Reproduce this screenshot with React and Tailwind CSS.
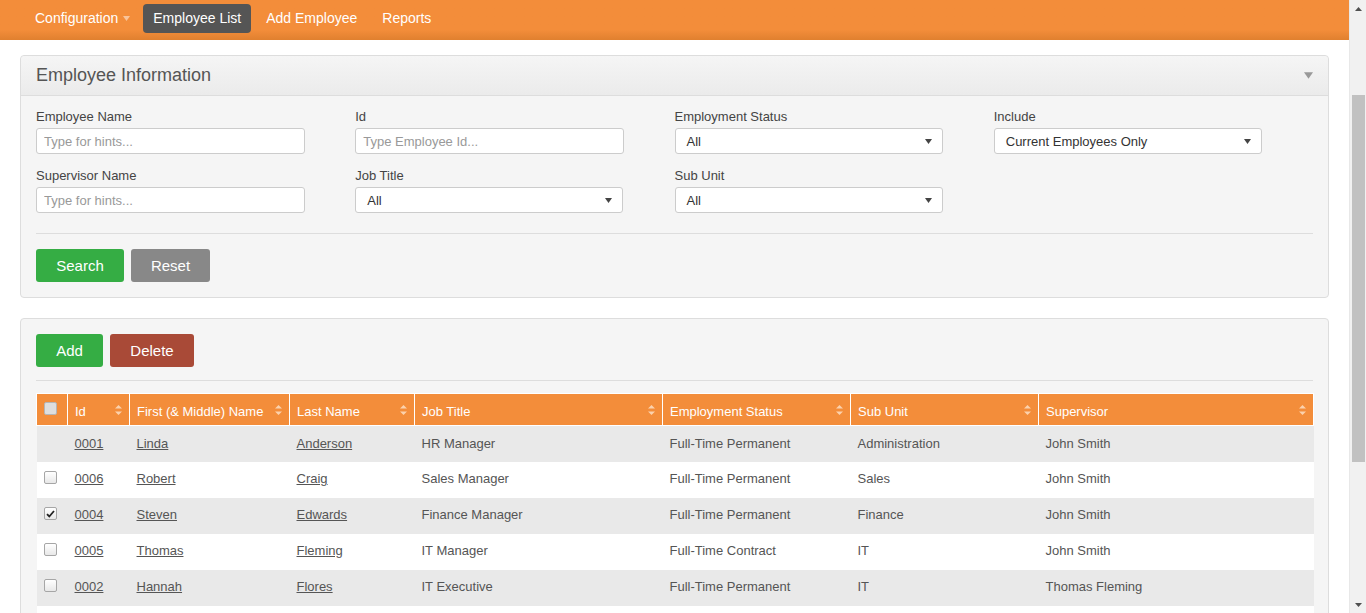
import React from 'react';

const employees = [
  { id: '0001', first: 'Linda', last: 'Anderson', job: 'HR Manager', status: 'Full-Time Permanent', unit: 'Administration', sup: 'John Smith', box: false },
  { id: '0006', first: 'Robert', last: 'Craig', job: 'Sales Manager', status: 'Full-Time Permanent', unit: 'Sales', sup: 'John Smith', box: true },
  { id: '0004', first: 'Steven', last: 'Edwards', job: 'Finance Manager', status: 'Full-Time Permanent', unit: 'Finance', sup: 'John Smith', box: true, checked: true },
  { id: '0005', first: 'Thomas', last: 'Fleming', job: 'IT Manager', status: 'Full-Time Contract', unit: 'IT', sup: 'John Smith', box: true },
  { id: '0002', first: 'Hannah', last: 'Flores', job: 'IT Executive', status: 'Full-Time Permanent', unit: 'IT', sup: 'Thomas Fleming', box: true },
];

const columns = [
  { label: 'Id', w: 'w-[62px]' },
  { label: 'First (& Middle) Name', w: 'w-[160px]' },
  { label: 'Last Name', w: 'w-[125px]' },
  { label: 'Job Title', w: 'w-[248px]' },
  { label: 'Employment Status', w: 'w-[188px]' },
  { label: 'Sub Unit', w: 'w-[188px]' },
  { label: 'Supervisor', w: 'w-[275px]' },
];

// small down triangle used by selects and menus
const Caret = ({ className }) => (
  <svg width="7" height="5" viewBox="0 0 7 5" className={className}>
    <path d="M0 0 H7 L3.5 5 Z" fill="currentColor" />
  </svg>
);

const SortIcon = () => (
  <svg width="7" height="10" viewBox="0 0 7 10" className="text-[#fbd2ad]">
    <path d="M3.5 0 L7 3.5 H0 Z" fill="currentColor" />
    <path d="M0 6.5 H7 L3.5 10 Z" fill="currentColor" />
  </svg>
);

const CheckBox = ({ checked, header }) => (
  <span
    className={
      'inline-flex items-center justify-center w-[13px] h-[13px] rounded-[2px] border ' +
      (header ? 'border-[#b5b5b5] bg-[#dedede]' : 'border-[#a6a6a6] bg-gradient-to-b from-white to-[#e8e8e8]')
    }
  >
    {checked && (
      <svg width="9" height="8" viewBox="0 0 9 8">
        <path d="M1 4.2 L3.3 6.5 L8 1" stroke="#222" strokeWidth="1.8" fill="none" />
      </svg>
    )}
  </span>
);

const TextField = ({ label, placeholder }) => (
  <div>
    <div className="pt-[1px] text-[13px] leading-[18px] text-[#444]">{label}</div>
    <input
      readOnly
      placeholder={placeholder}
      className="mt-[2px] w-[269px] h-[26px] px-[7px] pt-[1px] text-[13px] bg-white border border-[#ccc] rounded-[3px] placeholder:text-[#999] outline-none"
    />
  </div>
);

const SelectField = ({ label, value }) => (
  <div>
    <div className="pt-[1px] text-[13px] leading-[18px] text-[#444]">{label}</div>
    <div className="mt-[2px] w-[268px] h-[26px] pl-[11px] pr-[10px] pt-[1px] flex items-center justify-between text-[13px] text-[#333] bg-white border border-[#ccc] rounded-[3px]">
      <span>{value}</span>
      <Caret className="text-[#444]" />
    </div>
  </div>
);

const App = () => {
  return (
    <div className="h-[613px] overflow-hidden flex bg-white" style={{ fontFamily: '"Liberation Sans", Arial, sans-serif' }}>
      <div className="flex-1 overflow-hidden">
        {/* top menu */}
        <nav className="h-[40px] bg-gradient-to-b from-[#f38d3a] from-75% to-[#e0802f] flex items-start pt-[4px] pl-[25px]">
          <div className="flex items-center h-[29px] px-[10px] text-[14px] text-white">
            Configuration
            <Caret className="ml-[5px] text-[#f9c49a]" />
          </div>
          <div className="flex items-center h-[29px] px-[10px] ml-[3px] rounded-[4px] bg-[#555] text-[14px] text-white">Employee List</div>
          <div className="flex items-center h-[29px] px-[15px] text-[14px] text-white">Add Employee</div>
          <div className="flex items-center h-[29px] px-[10px] text-[14px] text-white">Reports</div>
        </nav>

        <div className="px-[20px] pt-[15px]">
          {/* search panel */}
          <div className="border border-[#ddd] rounded-[4px] bg-[#f5f5f5]">
            <div className="h-[40px] px-[15px] flex items-center justify-between bg-gradient-to-b from-[#f5f5f5] to-[#ebebeb] border-b border-[#ddd] rounded-t-[4px]">
              <h1 className="text-[18px] text-[#555]">Employee Information</h1>
              <Caret className="w-[9px] h-[7px] text-[#999]" />
            </div>
            <div className="px-[15px] pt-[11px] pb-[15px]">
              <div className="grid grid-cols-4 gap-y-[12px]">
                <TextField label="Employee Name" placeholder="Type for hints..." />
                <TextField label="Id" placeholder="Type Employee Id..." />
                <SelectField label="Employment Status" value="All" />
                <SelectField label="Include" value="Current Employees Only" />
                <TextField label="Supervisor Name" placeholder="Type for hints..." />
                <SelectField label="Job Title" value="All" />
                <SelectField label="Sub Unit" value="All" />
              </div>
              <div className="mt-[20px] border-t border-[#ddd]" />
              <div className="mt-[15px] flex gap-[7px]">
                <button className="w-[88px] h-[33px] pt-[1px] rounded-[3px] bg-[#35ad44] text-white text-[15px]">Search</button>
                <button className="w-[79px] h-[33px] pt-[1px] rounded-[3px] bg-[#888] text-white text-[15px]">Reset</button>
              </div>
            </div>
          </div>

          {/* results panel */}
          <div className="mt-[20px] border border-[#ddd] rounded-[4px] bg-[#f5f5f5] px-[15px] pt-[15px] pb-[15px]">
            <div className="flex gap-[7px]">
              <button className="w-[67px] h-[33px] pt-[1px] rounded-[3px] bg-[#35ad44] text-white text-[15px]">Add</button>
              <button className="w-[84px] h-[33px] pt-[1px] rounded-[3px] bg-[#a94a37] text-white text-[15px]">Delete</button>
            </div>
            <div className="mt-[13px] border-t border-[#ddd]" />
            <table className="mt-[12px] w-full table-fixed border-collapse">
              <colgroup>
                <col className="w-[31px]" />
                {columns.map((c) => (
                  <col key={c.label} className={c.w} />
                ))}
              </colgroup>
              <thead>
                <tr className="h-[32px] bg-[#f38d3a] text-white">
                  <th className="border border-white px-[7px] text-left align-middle">
                    <span className="flex -mt-[2px]"><CheckBox header /></span>
                  </th>
                  {columns.map((c) => (
                    <th key={c.label} className="border border-white pl-[7px] pr-[7px] pt-[4px] text-left font-normal text-[13px]">
                      <div className="flex items-center justify-between">
                        <span>{c.label}</span>
                        <span className="-mt-[4px]"><SortIcon /></span>
                      </div>
                    </th>
                  ))}
                </tr>
              </thead>
              <tbody>
                {employees.map((e, i) => (
                  <tr key={e.id} className={'h-[36px] text-[13px] text-[#555] ' + (i % 2 === 0 ? 'bg-[#e9e9e9]' : 'bg-white')}>
                    <td className="px-[7px]">
                      {e.box && <span className="flex -mt-[4px]"><CheckBox checked={e.checked} /></span>}
                    </td>
                    <td className="px-[7px] pb-[1px]"><a className="underline text-[#555]">{e.id}</a></td>
                    <td className="px-[7px] pb-[1px]"><a className="underline text-[#555]">{e.first}</a></td>
                    <td className="px-[7px] pb-[1px]"><a className="underline text-[#555]">{e.last}</a></td>
                    <td className="px-[7px] pb-[1px]">{e.job}</td>
                    <td className="px-[7px] pb-[1px]">{e.status}</td>
                    <td className="px-[7px] pb-[1px]">{e.unit}</td>
                    <td className="px-[7px] pb-[1px]">{e.sup}</td>
                  </tr>
                ))}
                <tr className="h-[36px] bg-white">
                  <td colSpan={8} />
                </tr>
              </tbody>
            </table>
          </div>
        </div>
      </div>

      {/* browser scrollbar */}
      <div className="w-[17px] bg-[#f1f1f1] flex flex-col items-center border-l border-[#e8e8e8]">
        <div className="h-[17px] flex items-center justify-center">
          <svg width="7" height="4" viewBox="0 0 7 4"><path d="M0 4 L3.5 0 L7 4 Z" fill="#505050" /></svg>
        </div>
        <div className="mt-[78px] w-[13px] h-[367px] bg-[#c1c1c1]" />
        <div className="flex-1" />
        <div className="h-[17px] flex items-center justify-center">
          <svg width="7" height="4" viewBox="0 0 7 4"><path d="M0 0 H7 L3.5 4 Z" fill="#505050" /></svg>
        </div>
      </div>
    </div>
  );
};

export default App;
